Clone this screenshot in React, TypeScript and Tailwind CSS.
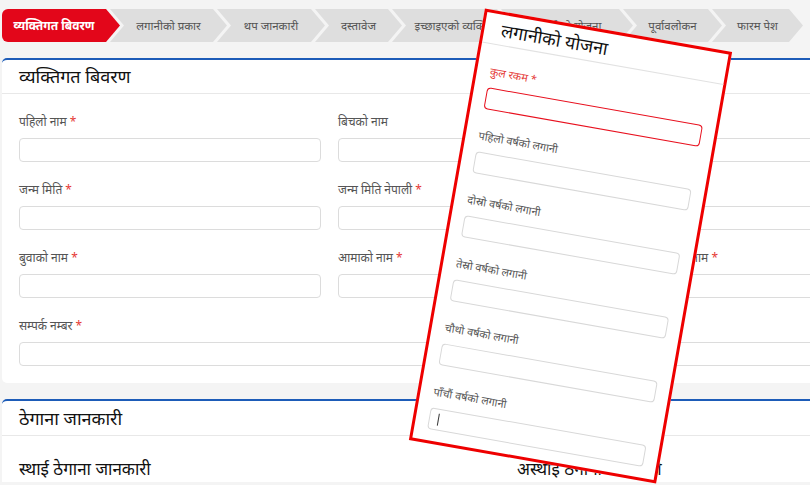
const steps = [
  { label: 'व्यक्तिगत बिवरण', w: 'w-[118px]', active: true },
  { label: 'लगानीको प्रकार', w: 'w-[117px]' },
  { label: 'थप जानकारी', w: 'w-[108px]' },
  { label: 'दस्तावेज', w: 'w-[87px]' },
  { label: 'इच्छाइएको व्यक्ति', w: 'w-[119px]' },
  { label: 'लगानीको योजना', w: 'w-[132px]' },
  { label: 'पूर्वावलोकन', w: 'w-[99px]' },
  { label: 'फारम पेश', w: 'w-[91px]' },
];

const Stepper = () => (
  <div className="flex h-[33px] pl-[2px]">
    {steps.map((s, i) =>
      s.active ? (
        <div
          key={s.label}
          className={`${s.w} flex-none flex items-center justify-center pr-[14px] rounded-l-[6px] bg-[#e3061a] text-white font-bold text-[12px] [clip-path:polygon(0_0,calc(100%_-_14px)_0,100%_50%,calc(100%_-_14px)_100%,0_100%)]`}
        >
          {s.label}
        </div>
      ) : (
        <div
          key={s.label}
          className={`${s.w} flex-none -ml-[10px] flex items-center justify-center px-[14px] bg-[#dedede] text-[#555] text-[11.5px] whitespace-nowrap [clip-path:polygon(0_0,calc(100%_-_14px)_0,100%_50%,calc(100%_-_14px)_100%,0_100%,14px_50%)]`}
        >
          {s.label}
        </div>
      )
    )}
  </div>
);

const Field = ({ label, req, span }: { label?: string; req?: boolean; span?: boolean }) => (
  <div className={span ? 'col-span-3' : ''}>
    <div className="h-[16px] text-[12px] leading-[16px] text-[#555]">
      {label}
      {req && <span className="text-[#e53935]"> *</span>}
    </div>
    <div className="mt-[8px] h-[24px] rounded-[4px] border border-[#dcdcdc] bg-white" />
  </div>
);

const PlanField = ({ label, error, caret }: { label: string; error?: boolean; caret?: boolean }) => (
  <div className="mb-[19px]">
    <div className={`h-[16px] text-[11px] leading-[16px] ${error ? 'text-[#e53935]' : 'text-[#555]'}`}>
      {label}
      {error && ' *'}
    </div>
    <div
      className={`mt-[8px] h-[22px] rounded-[4px] border flex items-center pl-[8px] ${
        error ? 'border-[#e8101e]' : 'border-[#d8d8d8]'
      }`}
    >
      {caret && <div className="w-px h-[12px] bg-[#333]" />}
    </div>
  </div>
);

export default function App() {
  return (
    <div className="relative w-[810px] h-[485px] overflow-hidden bg-[#f4f4f4] font-['Noto_Sans',sans-serif]">
      <div className="pt-[9px]">
        <Stepper />
      </div>

      {/* personal details */}
      <div className="mt-[16px] ml-[2px] w-[1000px] bg-white rounded-[5px] border-t-2 border-[#1d5cb8]">
        <div className="h-[34px] flex items-center pl-[17px] border-b border-[#e8e8e8] text-[18px] text-[#111]">
          व्यक्तिगत बिवरण
        </div>
        <div className="grid grid-cols-[302px_302px_302px] gap-x-[17px] gap-y-[20px] px-[17px] pt-[20px] pb-[17px]">
          <Field label="पहिलो नाम" req />
          <Field label="बिचको नाम" />
          <Field label="थर" req />
          <Field label="जन्म मिति" req />
          <Field label="जन्म मिति नेपाली" req />
          <Field label="लिङ्ग" req />
          <Field label="बुवाको नाम" req />
          <Field label="आमाको नाम" req />
          <Field label="बाजेको नाम" req />
          <Field label="सम्पर्क नम्बर" req span />
        </div>
      </div>

      {/* address */}
      <div className="mt-[16px] ml-[2px] w-[1000px] bg-white rounded-t-[5px] border-t-2 border-[#1d5cb8]">
        <div className="h-[35px] flex items-center pl-[17px] border-b border-[#e8e8e8] text-[18px] text-[#111]">
          ठेगाना जानकारी
        </div>
        <div className="flex pl-[17px] pt-[20px] text-[17px] text-[#111]">
          <div className="w-[498px]">स्थाई ठेगाना जानकारी</div>
          <div>अस्थाई ठेगाना जानकारी</div>
        </div>
      </div>

      {/* zoomed investment plan card */}
      <div className="absolute left-[445px] top-[27px] w-[251px] h-[438px] rotate-[10deg] bg-white border-[3px] border-[#ee0000]">
        <div className="h-[31px] flex items-center pl-[17px] border-b border-[#e2e2e2] text-[18px] text-[#111]">
          लगानीको योजना
        </div>
        <div className="px-[13px] pt-[19px]">
          <PlanField label="कुल रकम" error />
          <PlanField label="पहिलो वर्षको लगानी" />
          <PlanField label="दोस्रो वर्षको लगानी" />
          <PlanField label="तेस्रो वर्षको लगानी" />
          <PlanField label="चौथो वर्षको लगानी" />
          <PlanField label="पाँचौं वर्षको लगानी" caret />
        </div>
      </div>
    </div>
  );
}
